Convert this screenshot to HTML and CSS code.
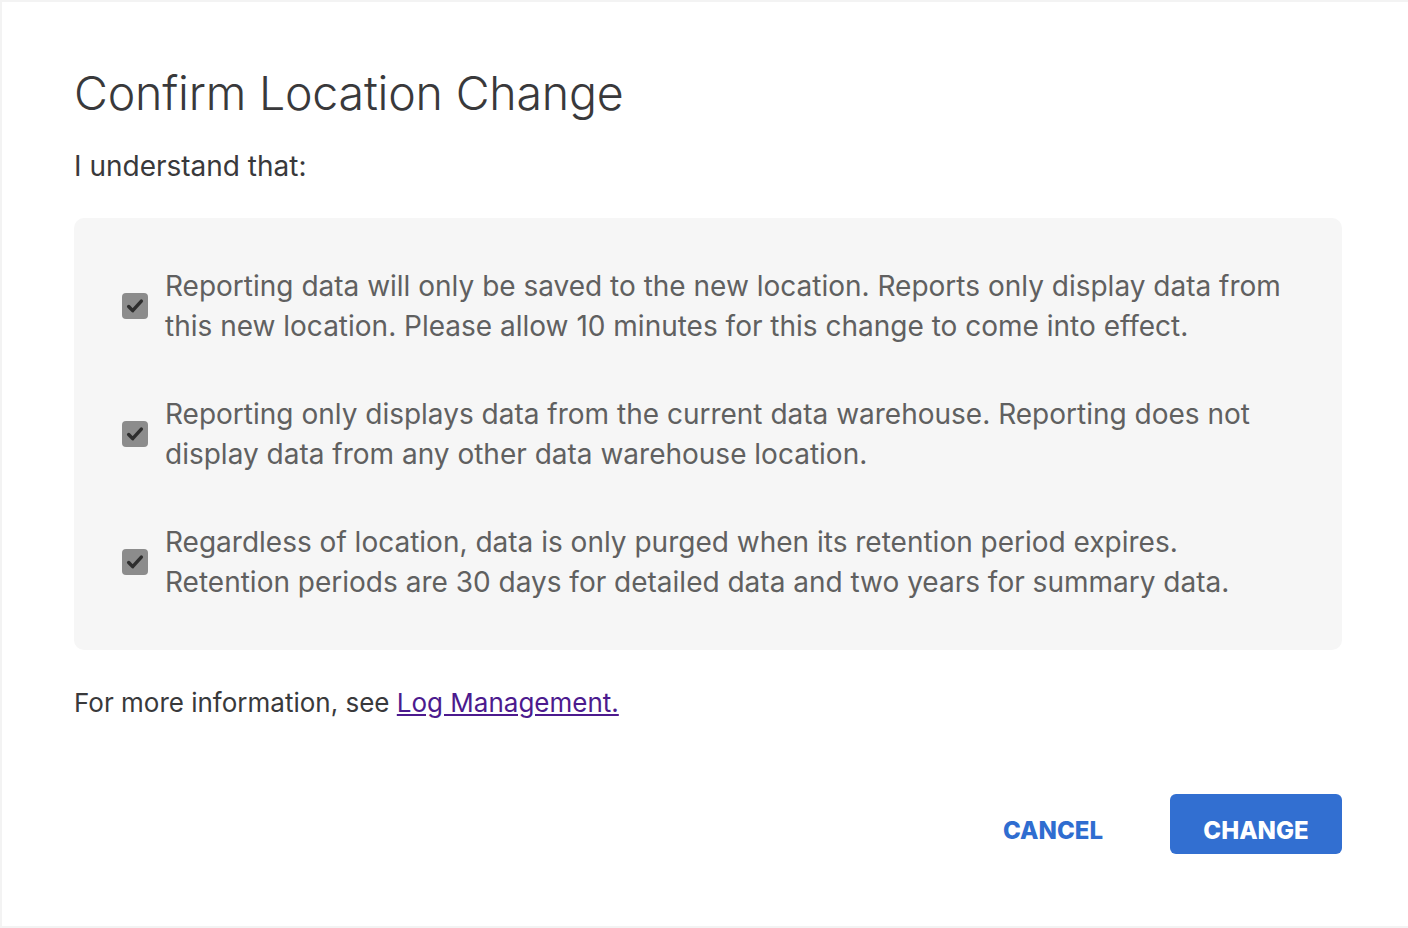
FILE: index.html
```html
<!DOCTYPE html>
<html lang="en">
<head>
<meta charset="utf-8">
<title>Confirm Location Change</title>
<link rel="stylesheet" href="styles.css">
</head>
<body>
<div class="dialog">
  <h1 class="title">Confirm Location Change</h1>
  <p class="lead">I understand that:</p>
  <div class="panel">
    <label class="item">
      <span class="check"><svg viewBox="0 0 16 16" width="22" height="22"><path d="M3.4 8.4l2.9 3L12.6 4.4" fill="none" stroke="#2e2e2e" stroke-width="2.5" stroke-linecap="round" stroke-linejoin="round"/></svg></span>
      <span class="text">Reporting data will only be saved to the new location. Reports only display data from this new location. Please allow 10 minutes for this change to come into effect.</span>
    </label>
    <label class="item">
      <span class="check"><svg viewBox="0 0 16 16" width="22" height="22"><path d="M3.4 8.4l2.9 3L12.6 4.4" fill="none" stroke="#2e2e2e" stroke-width="2.5" stroke-linecap="round" stroke-linejoin="round"/></svg></span>
      <span class="text">Reporting only displays data from the current data warehouse. Reporting does not display data from any other data warehouse location.</span>
    </label>
    <label class="item">
      <span class="check"><svg viewBox="0 0 16 16" width="22" height="22"><path d="M3.4 8.4l2.9 3L12.6 4.4" fill="none" stroke="#2e2e2e" stroke-width="2.5" stroke-linecap="round" stroke-linejoin="round"/></svg></span>
      <span class="text">Regardless of location, data is only purged when its retention period expires. Retention periods are 30 days for detailed data and two years for summary data.</span>
    </label>
  </div>
  <p class="more">For more information, see <a href="#" class="link">Log Management.</a></p>
  <div class="actions">
    <button class="btn btn-text">CANCEL</button>
    <button class="btn btn-primary">CHANGE</button>
  </div>
</div>
</body>
</html>
```
FILE: styles.css
```css
html, body {
  margin: 0;
  padding: 0;
  background: #f3f3f3;
}
body {
  padding: 2px 0 2px 2px;
  font-family: Inter, "Noto Sans", sans-serif;
}
.dialog {
  background: #ffffff;
  height: 924px;
  box-sizing: border-box;
  padding: 62px 66px 0 72px;
  color: #39393b;
}
.title {
  margin: 0;
  font-size: 46.5px;
  font-weight: 300;
  line-height: 58px;
  color: #39393b;
  letter-spacing: -0.2px;
}
.lead {
  margin: 26px 0 0;
  font-size: 28px;
  line-height: 36px;
  color: #39393b;
}
.panel {
  margin-top: 34px;
  background: #f6f6f6;
  border-radius: 10px;
  padding: 48px 48px;
  display: flex;
  flex-direction: column;
  gap: 48px;
}
.item {
  display: flex;
  align-items: center;
  gap: 17px;
}
.check {
  flex: none;
  width: 26px;
  height: 26px;
  border-radius: 4px;
  background: #8c8c8c;
  display: flex;
  align-items: center;
  justify-content: center;
}
.text {
  font-size: 28px;
  line-height: 40px;
  color: #606060;
}
.more {
  margin: 35px 0 0;
  font-size: 26px;
  line-height: 36px;
  color: #39393b;
}
.link {
  color: #4c1a8e;
  text-decoration: underline;
}
.actions {
  margin-top: 73px;
  display: flex;
  justify-content: flex-end;
  align-items: center;
  gap: 32px;
}
.btn {
  font-family: Inter, "Noto Sans", sans-serif;
  font-size: 24px;
  font-weight: 800;
  border: none;
  border-radius: 6px;
  height: 60px;
  padding-top: 14px;
  cursor: pointer;
}
.btn-text {
  background: transparent;
  color: #2f6dd0;
  padding-left: 35px;
  padding-right: 35px;
}
.btn-primary {
  background: #326fd1;
  color: #ffffff;
  width: 172px;
}
```
